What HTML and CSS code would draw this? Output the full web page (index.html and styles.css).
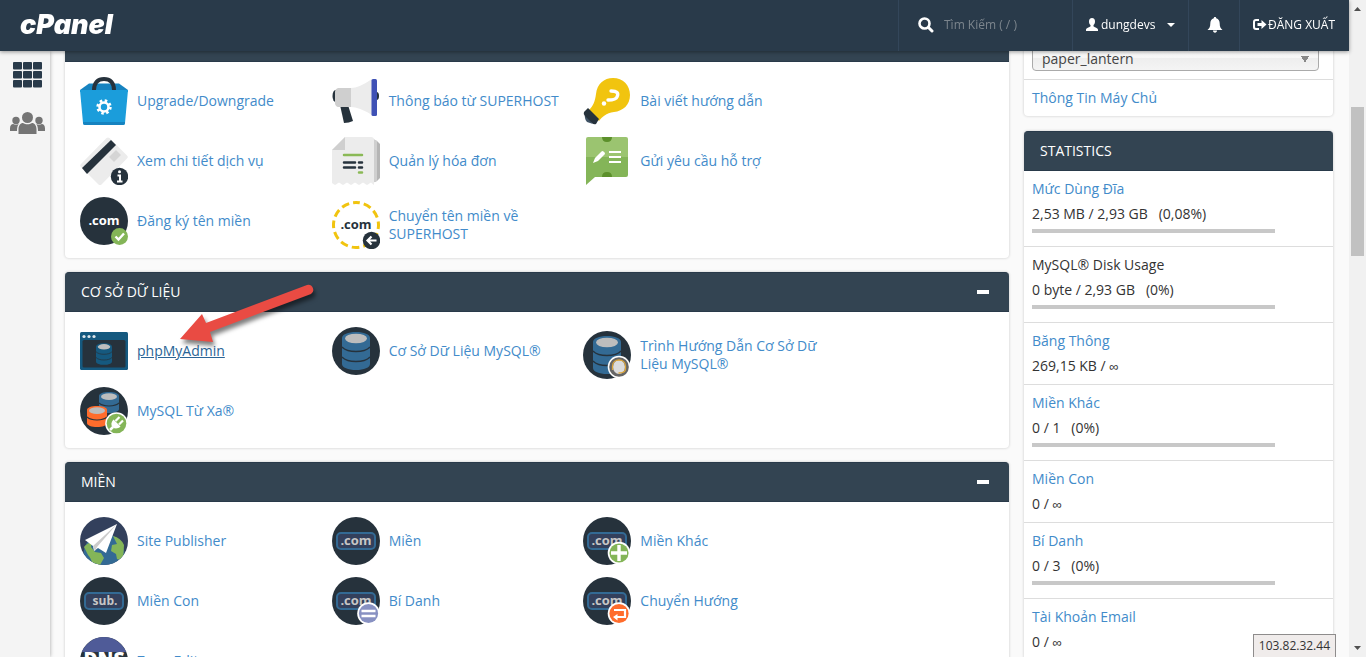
FILE: index.html
```html
<!DOCTYPE html>
<html lang="vi">
<head>
    <meta charset="UTF-8">
    <meta name="viewport" content="width=device-width, initial-scale=1.0">
    <title>cPanel</title>
    <link rel="stylesheet" href="styles.css">
</head>
<body>
    <!-- Shared shapes -->
    <svg class="sprite" aria-hidden="true">
        <symbol id="db" viewBox="0 0 28 38">
            <path d="M0 6C0 2.500 6 0 14 0s14 2.500 14 6v26c0 3.500-6 6-14 6S0 35.500 0 32z" fill="currentColor"/>
            <ellipse cx="14" cy="6.500" rx="11" ry="4.800" fill="#bdbdbd"/>
            <path d="M0 15c3 3.200 8 4.500 14 4.500S25 18.200 28 15M0 25c3 3.200 8 4.500 14 4.500S25 28.200 28 25" fill="none" stroke="#26323c" stroke-width="1.300"/>
        </symbol>
        <symbol id="db-short" viewBox="0 0 20 21">
            <path d="M0 4c0-2.500 4.500-4 10-4s10 1.500 10 4v13c0 2.500-4.500 4-10 4S0 19.500 0 17z" fill="currentColor"/>
            <ellipse cx="10" cy="4.700" rx="8" ry="3.400" fill="#bdbdbd"/>
            <path d="M0 11c2 2.200 6 3 10 3s8-.8 10-3" fill="none" stroke="#26323c" stroke-width="1.200"/>
        </symbol>
        <symbol id="domain" viewBox="0 0 48 48">
            <circle cx="24" cy="24" r="24" fill="#26323c"/>
            <rect x="5" y="16" width="38" height="16" rx="4" fill="#33405c" stroke="#336a94" stroke-width="2"/>
        </symbol>
    </svg>

    <header class="topbar">
        <a class="logo" href="#">cPanel</a>
        <div class="topbar-cell search">
            <svg width="16" height="16" viewBox="0 0 16 16"><circle cx="6.500" cy="6.500" r="5" fill="none" stroke="#fff" stroke-width="2.600"/><path d="M10.500 10.500l3.500 3.500" stroke="#fff" stroke-width="3" stroke-linecap="round"/></svg>
            <input type="text" placeholder="Tìm Kiếm ( / )" aria-label="Tìm Kiếm">
        </div>
        <button class="topbar-cell user">
            <svg width="12" height="13" viewBox="0 0 12 13"><path d="M6 0c2 0 3 1.400 3 3.400C9 5 8.300 6.400 7.500 7v1.300c0 .7 4.500 1.500 4.500 3.500V13H0v-1.200c0-2 4.500-2.800 4.500-3.500V7C3.700 6.400 3 5 3 3.400 3 1.400 4 0 6 0z" fill="#fff"/></svg>
            <span>dungdevs</span>
            <i class="caret"></i>
        </button>
        <button class="topbar-cell bell" aria-label="Thông báo">
            <svg width="16" height="16" viewBox="0 0 16 16"><path d="M8 0c.8 0 1.200.5 1.200 1.300C11.700 2 12.700 4 12.700 6.500c0 3.500 1 5 2.800 6.500H.5c1.800-1.500 2.800-3 2.800-6.500 0-2.500 1-4.500 3.500-5.200C6.800.5 7.200 0 8 0zM6 13.500h4c0 1.400-.8 2.200-2 2.200s-2-.8-2-2.200z" fill="#fff"/></svg>
        </button>
        <a class="topbar-cell logout" href="#">
            <svg width="14" height="12" viewBox="0 0 14 12"><path d="M6 1H3C1.800 1 1 1.800 1 3v5c0 1.200.8 2 2 2h3" fill="none" stroke="#fff" stroke-width="2"/><path d="M4.500 4H8.500V1l5 4.500-5 4.500V7H4.500z" fill="#fff"/></svg>
            <span>ĐĂNG XUẤT</span>
        </a>
    </header>

    <nav class="sidebar">
        <a href="#" aria-label="Trang chủ">
            <svg width="29" height="26" viewBox="0 0 29 26" fill="#293a4a"><rect width="9" height="7.500" rx="1"/><rect x="10" width="9" height="7.500" rx="1"/><rect x="20" width="9" height="7.500" rx="1"/><rect y="9" width="9" height="7.500" rx="1"/><rect x="10" y="9" width="9" height="7.500" rx="1"/><rect x="20" y="9" width="9" height="7.500" rx="1"/><rect y="18" width="9" height="7.500" rx="1"/><rect x="10" y="18" width="9" height="7.500" rx="1"/><rect x="20" y="18" width="9" height="7.500" rx="1"/></svg>
        </a>
        <a href="#" aria-label="Người dùng">
            <svg width="35" height="22" viewBox="0 0 35 22" fill="#757575"><circle cx="17.500" cy="5.500" r="5.500"/><circle cx="6" cy="8.500" r="3.700"/><circle cx="29" cy="8.500" r="3.700"/><path d="M8.500 22v-4.500c0-4 2-6.500 4.500-6.500 2.500 1.800 6.500 1.800 9 0 2.500 0 4.500 2.500 4.500 6.500V22z"/><path d="M0 19v-2.500C0 13.500 1.300 12 3.200 12c1.700 1 4 1 5.500 0C7.600 13.500 7 15.500 7 19zM35 19v-2.500c0-3-1.300-4.500-3.200-4.500-1.700 1-4 1-5.500 0 1.100 1.500 1.700 3.500 1.700 7z"/></svg>
        </a>
    </nav>

    <div class="content">
        <main class="groups">
            <section class="panel">
                <div class="panel-header"></div>
                <div class="apps">
                    <a class="app" href="#">
                        <svg viewBox="0 0 48 48"><path d="M0 13l9-6.500h30l9 6.500v2H0z" fill="#1683c0"/><path d="M0 13h48l-3 33q0 2-2 2H5q-2 0-2-2z" fill="#1b9ddb"/><path d="M3 45h42v1q0 2-2 2H5q-2 0-2-2z" fill="#1683c0"/><path d="M14 13C14 5.500 18 2 24 2s10 3.500 10 11" fill="none" stroke="#26323c" stroke-width="4"/><circle cx="24" cy="30" r="6.300" fill="none" stroke="#fff" stroke-width="2.800" stroke-dasharray="2.470 2.470"/><circle cx="24" cy="30" r="4.500" fill="none" stroke="#fff" stroke-width="2.600"/></svg>
                        <span>Upgrade/Downgrade</span>
                    </a>
                    <a class="app" href="#">
                        <svg viewBox="0 0 48 48"><ellipse cx="3.500" cy="19" rx="3" ry="6" fill="#26323c"/><ellipse cx="44.500" cy="19" rx="2.500" ry="4" fill="#26323c"/><path d="M8 28h8l5 16q-4 2-9 2z" fill="#26323c"/><path d="M6 11h13v19H6q-3-1-3-4V15q0-3 3-4z" fill="#cfcfcf"/><path d="M19 11q8 0 21-9v36q-13-8-21-8z" fill="#ececec"/><rect x="39.500" y="2" width="5.500" height="37" rx="1.500" fill="#3f51b5"/></svg>
                        <span>Thông báo từ SUPERHOST</span>
                    </a>
                    <a class="app" href="#">
                        <svg viewBox="0 0 48 48"><path d="M13 17C14 7 21 1 30 1c10 0 17 7 17 17s-7 16-16 17c-8 1-12 5-15 9L6 33c4-4 6-8 7-16z" fill="#f1c40f"/><path d="M2 36l8 11-6-2q-3-3-2-9z" fill="#3f5264"/><path d="M5 31l11 11-3 5q-2 1-4-1l-7-7q-2-2-1-4z" fill="#26323c"/><path d="M28 14c6 0 8 2 6 6-1 3-6 3-9 3" fill="none" stroke="#fff" stroke-width="3.400" stroke-linecap="round" stroke-linejoin="round"/><circle cx="21" cy="26.500" r="2.200" fill="#fff"/></svg>
                        <span>Bài viết hướng dẫn</span>
                    </a>
                    <a class="app" href="#">
                        <svg viewBox="0 0 48 48"><path d="M1 27L26.500 1q1.500-1 3 0L47 18.500q1.500 1.500 0 3L21.500 47.500q-1.500 1-3 0L1 30q-1.500-1.500 0-3z" fill="#ececec"/><path d="M31 3l5 5L7 37l-5-6z" fill="#26323c"/><path d="M29 20l7-7 5 5-7 7z" fill="#d5d5d5"/><circle cx="39.500" cy="39.500" r="8.700" fill="#26323c"/><path d="M37.500 38.500h2.500v6M37 44.500h5.500" fill="none" stroke="#fff" stroke-width="2"/><circle cx="39.500" cy="34.800" r="1.500" fill="#fff"/></svg>
                        <span>Xem chi tiết dịch vụ</span>
                    </a>
                    <a class="app" href="#">
                        <svg viewBox="0 0 48 48"><path d="M40 2l5 2 3 3v34l-3 3-5 2z" fill="#b5b5b5"/><path d="M40 1l5 3v40l-5 2z" fill="#cfcfcf"/><path d="M0 13L13 0h26q3 0 3 3v45l-3-2.500-4 2.500-4-2.500-4 2.500-4-2.500-4 2.500-4-2.500-4 2.500-4-2.500L3 48l-3-2z" fill="#ececec"/><path d="M0 13L13 0v13z" fill="#cfcfcf"/><path d="M12 18h18M27 35.500h3" stroke="#8ab956" stroke-width="2.500" stroke-linecap="round"/><path d="M12 25.500h11M27 25.500h3M12 30.500h11M27 30.500h3" stroke="#26323c" stroke-width="2.500" stroke-linecap="round"/></svg>
                        <span>Quản lý hóa đơn</span>
                    </a>
                    <a class="app" href="#">
                        <svg viewBox="0 0 48 48"><path d="M3 20V2q0-2 2-2h38q2 0 2 2v18z" fill="#9bc470"/><path d="M3 20h42v18q0 2-2 2H12l-9 8z" fill="#84b558"/><path d="M19 0h10q0 5-5 5t-5-5zM19 40h10q0-5-5-5t-5 5z" fill="#5c902b"/><path d="M10 26l2-5 6.500-6.500q1-1 2 0l1 1q1 1 0 2L15 24z" fill="#fff"/><path d="M26 15h12M26 20h12M26 25h12" stroke="#fff" stroke-width="2"/></svg>
                        <span>Gửi yêu cầu hỗ trợ</span>
                    </a>
                    <a class="app" href="#">
                        <svg viewBox="0 0 48 48"><circle cx="24" cy="24" r="24" fill="#26323c"/><text x="24" y="28" text-anchor="middle" class="icon-text" fill="#fff">.com</text><circle cx="39.500" cy="39.500" r="8.500" fill="#84b558"/><path d="M35.500 39.500l3 3 5.500-6" fill="none" stroke="#fff" stroke-width="2.400"/></svg>
                        <span>Đăng ký tên miền</span>
                    </a>
                    <a class="app app-tall" href="#">
                        <svg viewBox="0 0 48 48"><circle cx="24" cy="24" r="22.500" fill="none" stroke="#f1c40f" stroke-width="3" stroke-dasharray="7.800 3.980" stroke-dashoffset="3.900" transform="rotate(-90 24 24)"/><text x="24" y="28" text-anchor="middle" class="icon-text" fill="#26323c">.com</text><circle cx="39.500" cy="39.500" r="8.700" fill="#26323c"/><path d="M44.500 39.500h-8M39.500 35.500l-4 4 4 4" fill="none" stroke="#fff" stroke-width="2.200"/></svg>
                        <span>Chuyển tên miền về SUPERHOST</span>
                    </a>
                </div>
            </section>

            <section class="panel">
                <div class="panel-header">
                    <h2>CƠ SỞ DỮ LIỆU</h2>
                    <button class="collapse" aria-label="Thu gọn"></button>
                </div>
                <div class="apps">
                    <a class="app active" href="#">
                        <svg viewBox="0 0 48 48"><rect y="5" width="48" height="38" rx="1.500" fill="#15597f"/><rect x="2.500" y="13" width="43" height="27.500" rx="1.500" fill="#26323c"/><g fill="#dde6ec"><circle cx="4" cy="9.500" r="1.600"/><circle cx="9" cy="9.500" r="1.600"/><circle cx="14" cy="9.500" r="1.600"/></g><use href="#db" x="16" y="16" width="16" height="22" color="#15597f"/></svg>
                        <span>phpMyAdmin</span>
                    </a>
                    <a class="app" href="#">
                        <svg viewBox="0 0 48 48"><circle cx="24" cy="24" r="24" fill="#26323c"/><use href="#db" x="10" y="5" width="28" height="38" color="#336a94"/></svg>
                        <span>Cơ Sở Dữ Liệu MySQL®</span>
                    </a>
                    <a class="app app-tall" href="#">
                        <svg viewBox="0 0 48 48"><circle cx="24" cy="24" r="24" fill="#26323c"/><use href="#db" x="10" y="5" width="28" height="38" color="#336a94"/><circle cx="36" cy="36" r="11.300" fill="#fff"/><circle cx="36" cy="36" r="9.800" fill="#666"/><ellipse cx="36" cy="36" rx="6" ry="7" fill="#dcdcdc"/><path d="M29.500 39v-4c0-8 13-8 13 0v3q0 4-7 4" fill="none" stroke="#dda63a" stroke-width="1.300"/></svg>
                        <span>Trình Hướng Dẫn Cơ Sở Dữ Liệu MySQL®</span>
                    </a>
                    <a class="app" href="#">
                        <svg viewBox="0 0 48 48"><circle cx="24" cy="24" r="24" fill="#26323c"/><use href="#db-short" x="19" y="5" width="20" height="21" color="#336a94"/><use href="#db-short" x="7" y="19" width="20" height="21" color="#ff6c2c"/><circle cx="36.500" cy="36.500" r="11.300" fill="#fff"/><circle cx="36.500" cy="36.500" r="9.800" fill="#84b558"/><path d="M30 43l3-3" stroke="#fff" stroke-width="2.500"/><path d="M33.500 32.500l7 7c-2.500 2.500-6 2.500-8 .8-1.800-2-1.500-5.300 1-7.800z" fill="#fff"/><path d="M35.500 34l4-4M39 37.500l4-4" stroke="#fff" stroke-width="2.200"/></svg>
                        <span>MySQL Từ Xa®</span>
                    </a>
                </div>
            </section>

            <section class="panel">
                <div class="panel-header">
                    <h2>MIỀN</h2>
                    <button class="collapse" aria-label="Thu gọn"></button>
                </div>
                <div class="apps">
                    <a class="app" href="#">
                        <svg viewBox="0 0 48 48"><clipPath id="round"><circle cx="24" cy="24" r="24"/></clipPath><g clip-path="url(#round)"><rect width="48" height="48" fill="#33405c"/><circle cx="24" cy="37" r="20.500" fill="#336a94"/><path d="M4 30q3-4 8-5l-1 5 4 5 6 1 3 5-4 7H13q-2-7-5-10zM33 19q8 2 11 9l-1 16-6-2-1-5-5-3 1-6 5-1z" fill="#84b558"/></g><path d="M5 23L37 7 26 36l-8-5-4 3-1-5z" fill="#fff"/><path d="M13 29L37 7 17 30l-2 4z" fill="#ccc"/></svg>
                        <span>Site Publisher</span>
                    </a>
                    <a class="app" href="#">
                        <svg viewBox="0 0 48 48"><use href="#domain" width="48" height="48"/><text x="24" y="28" text-anchor="middle" class="icon-text" fill="#c6c6c6">.com</text></svg>
                        <span>Miền</span>
                    </a>
                    <a class="app" href="#">
                        <svg viewBox="0 0 48 48"><use href="#domain" width="48" height="48"/><text x="24" y="28" text-anchor="middle" class="icon-text" fill="#c6c6c6">.com</text><circle cx="36" cy="36" r="11.300" fill="#fff"/><circle cx="36" cy="36" r="9.600" fill="#84b558"/><path d="M36 28v16M28 36h16" stroke="#fff" stroke-width="3.400"/></svg>
                        <span>Miền Khác</span>
                    </a>
                    <a class="app" href="#">
                        <svg viewBox="0 0 48 48"><use href="#domain" width="48" height="48"/><text x="25" y="28" text-anchor="middle" class="icon-text icon-text-sub" fill="#c6c6c6">sub.</text></svg>
                        <span>Miền Con</span>
                    </a>
                    <a class="app" href="#">
                        <svg viewBox="0 0 48 48"><use href="#domain" width="48" height="48"/><text x="24" y="28" text-anchor="middle" class="icon-text" fill="#c6c6c6">.com</text><circle cx="36.500" cy="36.500" r="11.300" fill="#fff"/><circle cx="36.500" cy="36.500" r="9.600" fill="#8891c2"/><path d="M29.500 34h14M29.500 39h14" stroke="#fff" stroke-width="2.600"/></svg>
                        <span>Bí Danh</span>
                    </a>
                    <a class="app" href="#">
                        <svg viewBox="0 0 48 48"><use href="#domain" width="48" height="48"/><text x="24" y="28" text-anchor="middle" class="icon-text" fill="#c6c6c6">.com</text><circle cx="36" cy="36.500" r="11.300" fill="#fff"/><circle cx="36" cy="36.500" r="9.600" fill="#ff6c2c"/><path d="M31 33h11v7h-9" fill="none" stroke="#fff" stroke-width="2.200"/><path d="M34.500 37v6.500L30 40z" fill="#fff"/></svg>
                        <span>Chuyển Hướng</span>
                    </a>
                    <a class="app" href="#">
                        <svg viewBox="0 0 48 48"><circle cx="24" cy="24" r="24" fill="#26323c"/><path d="M1.800 15a24 24 0 0144.400 0z" fill="#4f5b98"/><text x="24" y="29" text-anchor="middle" class="icon-text icon-text-dns" fill="#fff">DNS</text></svg>
                        <span>Zone Editor</span>
                    </a>
                </div>
            </section>
        </main>

        <aside class="info">
            <section class="panel">
                <div class="info-row">
                    <select aria-label="Theme">
                        <option>paper_lantern</option>
                    </select>
                </div>
                <div class="info-row"><a href="#">Thông Tin Máy Chủ</a></div>
            </section>

            <section class="panel">
                <div class="panel-header">
                    <h2>STATISTICS</h2>
                </div>
                <div class="info-row">
                    <a href="#">Mức Dùng Đĩa</a>
                    <p>2,53 MB / 2,93 GB &nbsp; (0,08%)</p>
                    <div class="bar"></div>
                </div>
                <div class="info-row">
                    <span>MySQL® Disk Usage</span>
                    <p>0 byte / 2,93 GB &nbsp; (0%)</p>
                    <div class="bar"></div>
                </div>
                <div class="info-row">
                    <a href="#">Băng Thông</a>
                    <p>269,15 KB / <span class="infinity">∞</span></p>
                </div>
                <div class="info-row">
                    <a href="#">Miền Khác</a>
                    <p>0 / 1 &nbsp; (0%)</p>
                    <div class="bar"></div>
                </div>
                <div class="info-row">
                    <a href="#">Miền Con</a>
                    <p>0 / <span class="infinity">∞</span></p>
                </div>
                <div class="info-row">
                    <a href="#">Bí Danh</a>
                    <p>0 / 3 &nbsp; (0%)</p>
                    <div class="bar"></div>
                </div>
                <div class="info-row">
                    <a href="#">Tài Khoản Email</a>
                    <p>0 / <span class="infinity">∞</span></p>
                </div>
            </section>
        </aside>
    </div>

    <!-- Arrow pointing at phpMyAdmin -->
    <svg class="pointer" width="150" height="70" viewBox="0 0 150 70"><path d="M10 59L32 34l4 9L137 5a5 5 0 014 9L40 52l3 10z" fill="#e94b43"/></svg>

    <div class="status">103.82.32.44</div>

    <div class="scrollbar">
        <svg width="7" height="4" viewBox="0 0 7 4"><path d="M0 4h7L3.500 0z" fill="#505050"/></svg>
        <div class="thumb"></div>
        <svg width="7" height="4" viewBox="0 0 7 4"><path d="M0 0h7L3.500 4z" fill="#505050"/></svg>
    </div>
</body>
</html>
```

FILE: styles.css
```css
* {
    box-sizing: border-box;
}

body {
    font-family: 'Open Sans', sans-serif;
    font-size: 14px;
    line-height: 20px;
    margin: 0;
    height: 100vh;
    overflow: hidden;
    background: #fafafa;
    color: #333;
}

a {
    color: #428bca;
    text-decoration: none;
}

h2, p {
    margin: 0;
    font-size: 14px;
    font-weight: 400;
}

svg {
    flex: none;
}

button {
    font: inherit;
    color: inherit;
    background: none;
    border: none;
    padding: 0;
    cursor: pointer;
}

.sprite {
    position: absolute;
    width: 0;
    height: 0;
}

/* Top bar */
.topbar {
    position: fixed;
    top: 0;
    left: 0;
    right: 17px;
    z-index: 10;
    display: flex;
    height: 51px;
    background: #293a4a;
    color: #fff;
    font-size: 12px;
    box-shadow: 0 1px 4px rgba(0, 0, 0, 0.4);
}

.logo {
    flex: 1;
    padding-left: 20px;
    font-family: Inter, sans-serif;
    font-size: 27px;
    font-style: italic;
    font-weight: 900;
    line-height: 50px;
    color: #fff;
}

.topbar-cell {
    display: flex;
    align-items: center;
    padding-bottom: 2px;
    color: #fff;
    border-left: 1px solid #33465a;
}

.search {
    width: 174px;
    padding-left: 19px;
    gap: 10px;
}

.search input {
    width: 120px;
    padding: 0;
    font: inherit;
    color: #fff;
    background: none;
    border: none;
    outline: none;
}

.search input::placeholder {
    color: #7c858d;
}

.user {
    width: 116px;
    padding-left: 13px;
    gap: 3px;
}

.caret {
    margin-left: 9px;
    border: 4px solid transparent;
    border-top-color: #fff;
    border-bottom: none;
}

.bell {
    width: 51px;
    padding-left: 2px;
    justify-content: center;
}

.logout {
    width: 110px;
    padding-left: 13px;
    gap: 1px;
    white-space: nowrap;
}

/* Left menu */
.sidebar {
    position: fixed;
    top: 51px;
    bottom: 0;
    left: 0;
    width: 50px;
    padding: 11px 0 0 5px;
    display: flex;
    flex-direction: column;
    align-items: center;
    gap: 24px;
    background: #f4f4f4;
    box-shadow: 0 0 4px rgba(0, 0, 0, 0.35);
}

.sidebar a {
    display: flex;
}

/* Page content */
.content {
    display: flex;
    align-items: flex-start;
    gap: 15px;
    padding: 22px 33px 0 65px;
}

.groups {
    flex: 1;
}

.panel {
    margin-bottom: 14px;
    background: #fff;
    border-radius: 4px;
    box-shadow: 0 0 3px rgba(0, 0, 0, 0.2);
}

.panel-header {
    display: flex;
    justify-content: space-between;
    align-items: center;
    height: 40px;
    padding: 0 20px 0 16px;
    background: #334452;
    border: solid #293a4a;
    border-width: 1px 0;
    border-radius: 4px 4px 0 0;
    color: #fff;
}

.collapse {
    width: 12px;
    height: 4px;
    background: #fff;
}

.apps {
    display: grid;
    grid-template-columns: repeat(3, 1fr);
    grid-auto-rows: 60px;
    align-items: start;
    padding: 15px 174px 1px 15px;
}

.app {
    display: flex;
    align-items: center;
    gap: 9px;
    height: 48px;
    padding-right: 10px;
    line-height: 18px;
}

.app svg {
    width: 48px;
    height: 48px;
}

.app-tall {
    height: 56px;
}

.app.active {
    color: #2a6496;
    text-decoration: underline;
}

.icon-text {
    font-family: 'Open Sans', sans-serif;
    font-size: 13px;
    font-weight: 700;
}

.icon-text-sub {
    font-size: 12px;
}

.icon-text-dns {
    font-size: 19px;
    font-weight: 800;
}

/* Right column */
.info {
    width: 309px;
    padding-top: 15px;
}

.info .panel {
    margin-bottom: 15px;
}

.info-row {
    padding: 8px;
    border-bottom: 1px solid #ddd;
}

.info-row:last-child {
    border-bottom: none;
}

.info-row a {
    display: block;
}

.info-row p {
    margin-top: 5px;
}

.info-row select {
    display: block;
    width: 287px;
    height: 26px;
    padding: 1px 9px 0;
    font: inherit;
    color: #444;
    appearance: none;
    border: 1px solid #aaa;
    border-radius: 4px;
    background:
        linear-gradient(to bottom right, #888 50%, transparent 50%) right 9px top 10px / 4px 7px no-repeat,
        linear-gradient(to bottom left, #888 50%, transparent 50%) right 13px top 10px / 4px 7px no-repeat,
        linear-gradient(#fff 20%, #f6f6f6 50%, #eee 52%, #f4f4f4);
}

.bar {
    width: 83%;
    height: 4px;
    margin: 5px 0;
    background: #c8c8c8;
}

.infinity {
    font-family: 'Liberation Sans', sans-serif;
    font-size: 13px;
    line-height: 1;
}

/* Overlays */
.pointer {
    position: absolute;
    top: 280px;
    left: 170px;
    filter: drop-shadow(2px 4px 2px rgba(0, 0, 0, 0.5));
}

.status {
    position: fixed;
    right: 30px;
    bottom: 0;
    padding: 1px 5px;
    font-size: 12px;
    line-height: 20px;
    background: #f0eceb;
    border: 1px solid #8e8c8c;
    border-bottom: none;
}

.scrollbar {
    position: fixed;
    top: 0;
    right: 0;
    bottom: 0;
    width: 17px;
    padding: 7px 0;
    display: flex;
    flex-direction: column;
    justify-content: space-between;
    align-items: center;
    background: #f1f1f1;
}

.thumb {
    width: 13px;
    height: 149px;
    margin: 96px 0 auto;
    background: #c1c1c1;
}
```
